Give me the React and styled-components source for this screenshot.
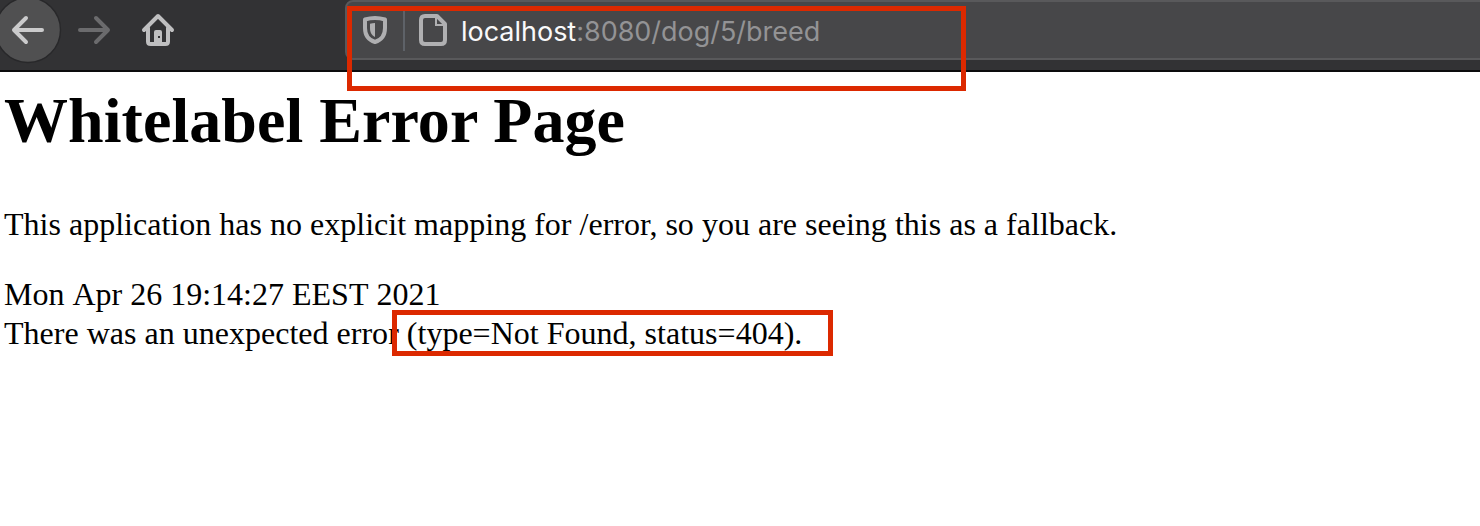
import React from "react";
import styled, { createGlobalStyle } from "styled-components";

const GlobalStyle = createGlobalStyle`
  body { margin: 0; background: #fff; overflow: hidden; }
`;

const Window = styled.div`
  position: relative;
  height: 526px;
  overflow: hidden;
  background: #fff;
`;

const Toolbar = styled.header`
  box-sizing: border-box;
  display: flex;
  height: 72px;
  background: #323234;
  border-bottom: 2px solid #0c0c0d;
`;

const Navigation = styled.nav`
  flex: none;
  width: 345px;
  height: 64px;
  svg { display: block; }
`;

const AddressBar = styled.div`
  box-sizing: border-box;
  flex: none;
  display: flex;
  align-items: center;
  width: 1160px;
  height: 60px;
  padding-left: 15px;
  background: #474749;
  border: 2px solid #59595b;
  border-radius: 8px;
`;

const Divider = styled.span`
  width: 2px;
  height: 40px;
  margin: 2px 14px 0 15px;
  background: #5e6268;
`;

const Url = styled.span`
  margin-left: 14px;
  padding-top: 4px;
  font: 400 27px/40px Inter, "Liberation Sans", sans-serif;
  letter-spacing: -0.02px;
  color: #939395;
  white-space: nowrap;
`;

const Host = styled.span`
  color: #f9f9fa;
`;

const Page = styled.main`
  padding: 12px 4px 0;
  font: 32px/39px "Liberation Serif", "Times New Roman", serif;
  color: #000;
  white-space: nowrap;
`;

const Title = styled.h1`
  margin: 0 0 47px;
  font-size: 64px;
  line-height: 74px;
  font-weight: 700;
  letter-spacing: 0.06px;
`;

const Message = styled.p`
  margin: 0 0 31px;
  letter-spacing: 0.012px;
`;

const Line = styled.div`
  font-kerning: ${(p) => (p.$unkerned ? "none" : "auto")};
  letter-spacing: ${(p) => (p.$unkerned ? "0" : "0.012px")};
`;

const Highlight = styled.div`
  position: absolute;
  box-sizing: border-box;
  left: ${(p) => p.$x}px;
  top: ${(p) => p.$y}px;
  width: ${(p) => p.$w}px;
  height: ${(p) => p.$h}px;
  border: 5px solid #dc2900;
`;

const NavIcons = () => (
  <svg width="200" height="64" fill="none" strokeLinecap="round" strokeLinejoin="round">
    <circle cx="28" cy="30" r="32.5" fill="#505051" stroke="#28282a" strokeWidth="1.4" />
    <path d="M42 30H14M26 18L14 30L26 42" stroke="#cbcbcc" strokeWidth="4" />
    <path d="M80 30H108M96 18L108 30L96 42" stroke="#6b6b6d" strokeWidth="4" />
    <path d="M144 30L158 16L172 30" stroke="#bfbfc0" strokeWidth="4" />
    <path d="M148 28V41.5Q148 44 150.500 44H165.500Q168 44 168 41.500V28" stroke="#bfbfc0" strokeWidth="4" />
    <path fillRule="evenodd" d="M154 44V32Q154 30 156 30H160Q162 30 162 32V44ZM158 36V38H160V36Z" fill="#bfbfc0" />
  </svg>
);

const ShieldIcon = () => (
  <svg width="26" height="30" viewBox="0 0 26 30">
    <path d="M13 3C16.500 3 20 3.600 23 4.500V13C23 20 19.500 25 13 27C6.500 25 3 20 3 13V4.500C6 3.600 9.500 3 13 3Z" fill="none" stroke="#afafb1" strokeWidth="4" strokeLinejoin="round" />
    <path d="M13 8V22C9.500 20 8 17.500 8 13V8.700Q10.500 8.100 13 8Z" fill="#afafb1" />
  </svg>
);

const DocumentIcon = () => (
  <svg width="28" height="32" viewBox="0 0 28 32">
    <path d="M6 2H18L26 10V26Q26 30 22 30H6Q2 30 2 26V6Q2 2 6 2Z" fill="none" stroke="#b0b0b2" strokeWidth="4" strokeLinejoin="round" />
    <path d="M17 3V11H25" fill="none" stroke="#b0b0b2" strokeWidth="2" />
  </svg>
);

export default function App() {
  return (
    <Window>
      <GlobalStyle />
      <Toolbar>
        <Navigation><NavIcons /></Navigation>
        <AddressBar>
          <ShieldIcon />
          <Divider />
          <DocumentIcon />
          <Url><Host>localhost</Host>:8080/dog/5/breed</Url>
        </AddressBar>
      </Toolbar>
      <Page>
        <Title>Whitelabel Error Page</Title>
        <Message>This application has no explicit mapping for /error, so you are seeing this as a fallback.</Message>
        <Line $unkerned>Mon Apr 26 19:14:27 EEST 2021</Line>
        <Line>There was an unexpected error (type=Not Found, status=404).</Line>
      </Page>
      <Highlight $x={347} $y={6} $w={619} $h={85} />
      <Highlight $x={392} $y={310} $w={441} $h={46} />
    </Window>
  );
}
